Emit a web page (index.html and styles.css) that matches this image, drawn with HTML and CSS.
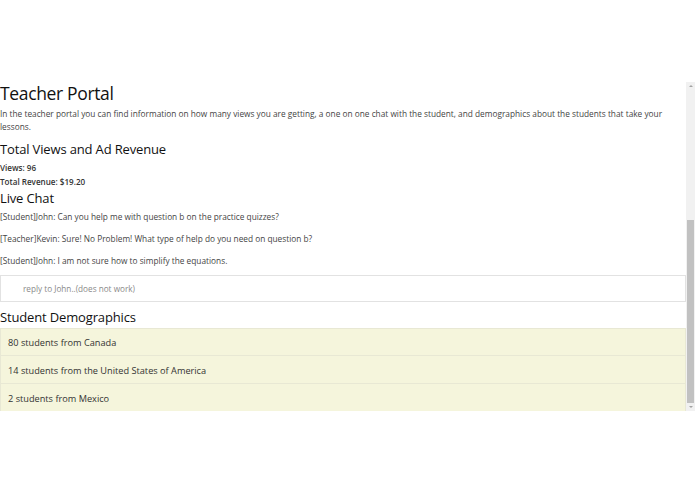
FILE: index.html
```html
<!DOCTYPE html>
<html>
<head>
<meta charset="utf-8">
<link rel="stylesheet" href="styles.css">
</head>
<body>
<div class="frame">
  <div class="content">
    <h1 class="title">Teacher Portal</h1>
    <p class="intro">In the teacher portal you can find information on how many views you are getting, a one on one chat with the student, and demographics about the students that take your lessons.</p>
    <h2 class="section">Total Views and Ad Revenue</h2>
    <p class="stat">Views: 96</p>
    <p class="stat">Total Revenue: $19.20</p>
    <h2 class="section chat-head">Live Chat</h2>
    <p class="msg">[Student]John: Can you help me with question b on the practice quizzes?</p>
    <p class="msg">[Teacher]Kevin: Sure! No Problem! What type of help do you need on question b?</p>
    <p class="msg">[Student]John: I am not sure how to simplify the equations.</p>
    <div class="reply"><span class="placeholder">reply to John..(does not work)</span></div>
    <h2 class="section demo-head">Student Demographics</h2>
    <ul class="demo">
      <li class="demo-item">80 students from Canada</li>
      <li class="demo-item">14 students from the United States of America</li>
      <li class="demo-item">2 students from Mexico</li>
    </ul>
  </div>
  <div class="scrollbar">
    <div class="arrow up"></div>
    <div class="track"></div>
    <div class="thumb"></div>
    <div class="arrow down"></div>
  </div>
</div>
</body>
</html>
```

FILE: styles.css
```css
html, body {
  margin: 0;
  padding: 0;
  background: #ffffff;
}
body {
  font-family: "Open Sans", "Noto Sans", sans-serif;
  color: #333;
}
.frame {
  margin-top: 82px;
  height: 329px;
  display: flex;
  width: 695px;
}
.content {
  flex: 1;
  min-width: 0;
}
.title {
  margin: 0;
  font-size: 17.5px;
  line-height: 22px;
  letter-spacing: -0.35px;
  font-weight: 500;
  color: #111;
}
.intro {
  margin: 3px 0 0;
  font-size: 8.3px;
  line-height: 13px;
  color: #444;
}
.section {
  margin: 8px 0 0;
  font-size: 13px;
  line-height: 17px;
  letter-spacing: -0.15px;
  font-weight: 500;
  color: #111;
}
.stat {
  margin: 3px 0 0;
  font-size: 8.1px;
  line-height: 13px;
  font-weight: 600;
  color: #333;
}
.stat + .stat {
  margin-top: 1px;
}
.chat-head {
  margin-top: 2px;
}
.msg {
  margin: 3px 0 0;
  font-size: 8.3px;
  line-height: 13px;
  color: #444;
}
.msg + .msg {
  margin-top: 9px;
}
.reply {
  margin-top: 8px;
  height: 25px;
  border: 1px solid #e2e2e2;
  display: flex;
  align-items: center;
  padding-left: 22px;
}
.placeholder {
  font-size: 8.2px;
  color: #8a8a8a;
}
.demo-head {
  margin-top: 7px;
}
.demo {
  list-style: none;
  margin: 2px 0 0;
  padding: 0;
}
.demo-item {
  background: #f5f5dc;
  border: 1px solid #e8e8d4;
  height: 26px;
  display: flex;
  align-items: center;
  padding: 1px 0 0 7px;
  box-sizing: content-box;
  font-size: 9.2px;
  color: #333;
}
.demo-item + .demo-item {
  border-top: none;
  height: 26px;
}
.demo-item:first-child {
  height: 25px;
}
.scrollbar {
  width: 9px;
  background: #f1f1f1;
  display: flex;
  flex-direction: column;
  align-items: center;
}
.arrow {
  width: 0;
  height: 0;
  border-left: 2px solid transparent;
  border-right: 2px solid transparent;
}
.arrow.up {
  margin-top: 3px;
  border-bottom: 2px solid #a3a3a3;
  margin-bottom: 4px;
}
.arrow.down {
  margin-top: 3px;
  margin-bottom: 3px;
  border-top: 2px solid #a3a3a3;
}
.track {
  flex: 1;
}
.thumb {
  width: 7px;
  height: 183px;
  background: #c1c1c1;
}
```
